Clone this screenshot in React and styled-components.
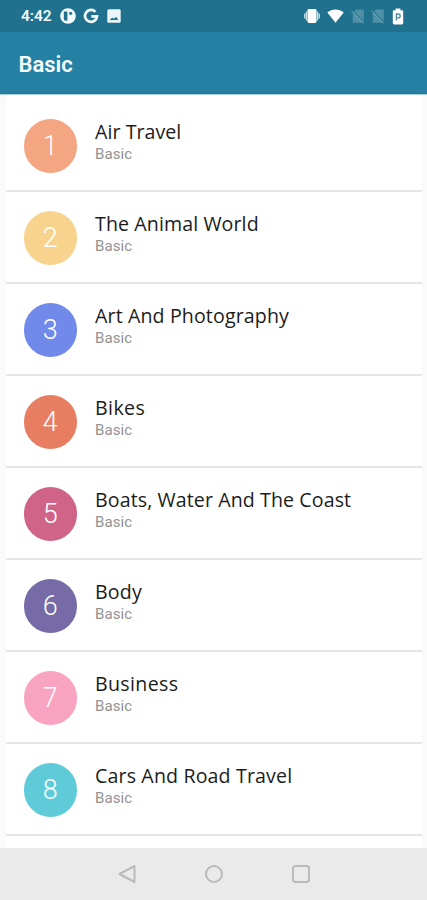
import React from "react";
import styled, { createGlobalStyle } from "styled-components";

const GlobalStyle = createGlobalStyle`
  * {
    box-sizing: border-box;
  }
  body {
    margin: 0;
    font-family: Roboto, "Liberation Sans", sans-serif;
    background: #fafafa;
  }
`;

const Screen = styled.div`
  height: 900px;
  display: flex;
  flex-direction: column;
  overflow: hidden;
  background: #fafafa;
`;

const StatusBar = styled.div`
  height: 32px;
  flex: none;
  display: flex;
  align-items: center;
  justify-content: space-between;
  padding: 0 23px 0 21px;
  background: #20718d;
  color: #f4fbfd;
`;

const StatusGroup = styled.div`
  display: flex;
  align-items: center;
  gap: ${({ $gap }) => $gap}px;
  svg {
    display: block;
  }
`;

const Clock = styled.span`
  width: 31px;
  font-size: 15.5px;
  font-weight: 600;
  line-height: 18px;
  letter-spacing: -0.1px;
`;

const AppBar = styled.header`
  height: 62px;
  flex: none;
  display: flex;
  align-items: center;
  padding: 5px 18.5px 0;
  background: #2581a3;
  border-bottom: 1px solid #137b9b;
  box-shadow: 0 1px 1px rgba(37, 129, 163, 0.35);
  z-index: 1;
`;

const AppTitle = styled.h1`
  margin: 0;
  font-size: 22px;
  font-weight: 600;
  line-height: 26px;
  color: #f4fbfd;
`;

const List = styled.main`
  flex: 1;
  min-height: 0;
  overflow: hidden;
  margin: 0 5px 0 6px;
  padding-top: 6px;
  background: #fff;
`;

const Row = styled.div`
  height: 92px;
  display: flex;
  align-items: flex-start;
  padding: 19px 0 0 17.5px;
  border-bottom: 2px solid #e5e5e5;
`;

const Badge = styled.div`
  width: 53.5px;
  height: 53.5px;
  flex: none;
  display: flex;
  align-items: center;
  justify-content: center;
  border-radius: 50%;
  background: ${({ $color }) => $color};
  color: #fff;
  font-size: 27px;
  font-weight: 300;
  line-height: 54px;
`;

const RowText = styled.div`
  margin-left: 18px;
`;

const Title = styled.div`
  font-family: "Open Sans", "Noto Sans", sans-serif;
  font-size: 19.6px;
  line-height: 26px;
  letter-spacing: ${({ $spacing }) => $spacing}px;
  white-space: nowrap;
  color: #1c1c1c;
`;

const Subtitle = styled.div`
  font-size: 15px;
  line-height: 18px;
  letter-spacing: 0.1px;
  color: #929292;
`;

const NavBar = styled.nav`
  height: 52px;
  flex: none;
  display: flex;
  align-items: center;
  justify-content: center;
  gap: 67px;
  padding-left: 1px;
  background: #eaeaea;
  svg {
    display: block;
    fill: none;
    stroke: #bababa;
    stroke-width: 2;
    stroke-linejoin: round;
  }
`;

const topics = [
  { name: "Air Travel", color: "#f4a582", spacing: 0.05 },
  { name: "The Animal World", color: "#f7d38d", spacing: 0.1 },
  { name: "Art And Photography", color: "#7189e8", spacing: 0.12 },
  { name: "Bikes", color: "#e77e62", spacing: 0.4 },
  { name: "Boats, Water And The Coast", color: "#cf6488", spacing: 0.1 },
  { name: "Body", color: "#766ba6", spacing: 0.2 },
  { name: "Business", color: "#f8a3c0", spacing: 0.35 },
  { name: "Cars And Road Travel", color: "#5fcbd9", spacing: 0.14 },
];

const PocketIcon = () => (
  <svg width="16" height="16" viewBox="0 0 16 16">
    <circle cx="8" cy="8" r="7.8" fill="#f4fbfd" />
    <path d="M3.8 3.5h3.6v9.3H6A2.2 2.2 0 0 1 3.8 10.6z" fill="#20718d" />
    <circle cx="10.6" cy="5.3" r="1.6" fill="#20718d" />
  </svg>
);

const GoogleIcon = () => (
  <svg width="16" height="16" viewBox="0 0 16 16" fill="none">
    <path
      d="M12.4 3.8A6 6 0 1 0 14 8.4H8.3"
      stroke="#f4fbfd"
      strokeWidth="2.7"
    />
  </svg>
);

const PictureIcon = () => (
  <svg width="14" height="14" viewBox="0 0 14 14">
    <rect x=".3" y=".3" width="13.4" height="13.4" rx="1.5" fill="#e9f5f9" />
    <path d="M2.7 11l2.4-2.6 1.7 1.4L9 7.8l2.5 3.2z" fill="#20718d" />
  </svg>
);

const VibrateIcon = () => (
  <svg width="16" height="16" viewBox="0 0 16 16">
    <rect x="3.5" y="1" width="9" height="14" rx="1.4" fill="#fff" />
    <path
      d="M2.5 3.5v9M13.5 3.5v9M.8 5.5v5M15.2 5.5v5"
      stroke="#c3dce4"
      strokeWidth="1.4"
    />
  </svg>
);

const WifiIcon = () => (
  <svg width="17" height="14" viewBox="0 0 17 14">
    <path d="M.3 3.6C5-.7 12-.7 16.7 3.6L8.5 13.8z" fill="#fff" />
  </svg>
);

const NoSimIcon = () => (
  <svg width="14" height="16" viewBox="0 0 14 16">
    <path d="M5 1.5h7.8v13.2H1.8V4.8z" fill="#4f90a5" />
    <path d="M.8 1.8l12.6 13" stroke="#20718d" strokeWidth="1.2" />
    <path d="M.3 2.6l12.4 12.8" stroke="#78adbd" strokeWidth="1" />
  </svg>
);

const BatteryIcon = () => (
  <svg width="12" height="17" viewBox="0 0 12 17">
    <path
      d="M3.6.5h4.8v1.7h1.4c.8 0 1.4.5 1.4 1.3V15c0 .8-.6 1.4-1.4 1.4H2.2c-.8 0-1.4-.6-1.4-1.4V3.5c0-.8.6-1.3 1.4-1.3h1.4z"
      fill="#fff"
    />
    <path
      d="M4.4 12.6V6h1.9a1.9 1.9 0 0 1 0 3.8H4.4"
      fill="none"
      stroke="#4b879c"
      strokeWidth="1.3"
    />
  </svg>
);

const App = () => {
  return (
    <>
      <GlobalStyle />
      <Screen>
        <StatusBar>
          <StatusGroup $gap={7.7}>
            <Clock>4:42</Clock>
            <PocketIcon />
            <GoogleIcon />
            <PictureIcon />
          </StatusGroup>
          <StatusGroup $gap={6.7}>
            <VibrateIcon />
            <WifiIcon />
            <NoSimIcon />
            <NoSimIcon />
            <BatteryIcon />
          </StatusGroup>
        </StatusBar>
        <AppBar>
          <AppTitle>Basic</AppTitle>
        </AppBar>
        <List>
          {topics.map((topic, index) => (
            <Row key={topic.name}>
              <Badge $color={topic.color}>{index + 1}</Badge>
              <RowText>
                <Title $spacing={topic.spacing}>{topic.name}</Title>
                <Subtitle>Basic</Subtitle>
              </RowText>
            </Row>
          ))}
        </List>
        <NavBar>
          <svg width="20" height="20" viewBox="0 0 20 20">
            <path d="M17.5 2v16L2.5 10z" />
          </svg>
          <svg width="20" height="20" viewBox="0 0 20 20">
            <circle cx="10" cy="10" r="8" />
          </svg>
          <svg width="20" height="20" viewBox="0 0 20 20">
            <rect x="2" y="2" width="16" height="16" rx="2.5" />
          </svg>
        </NavBar>
      </Screen>
    </>
  );
};

export default App;
